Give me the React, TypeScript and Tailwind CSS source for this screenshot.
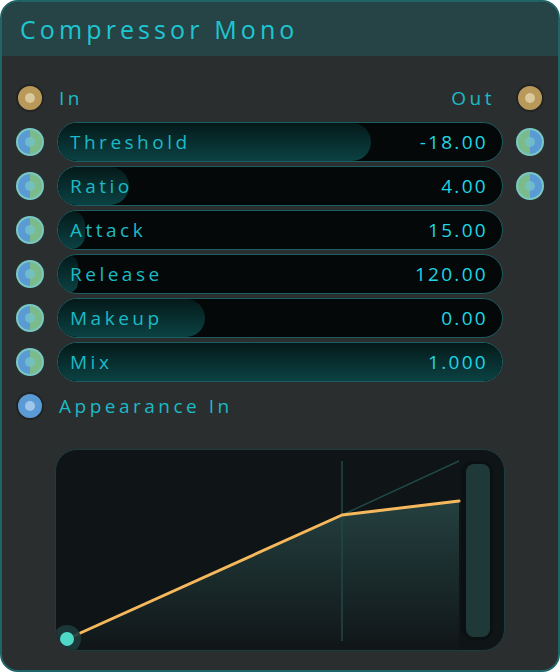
import React from 'react';

const font = { fontFamily: '"Open Sans", "DejaVu Sans", sans-serif' };

type Kind = 'gold' | 'multi' | 'multiR' | 'blue';

const Socket = ({ kind }: { kind: Kind }) => {
  if (kind === 'gold') {
    return (
      <div className="flex h-[28px] w-[28px] shrink-0 items-center justify-center rounded-full border-2 border-[#222424] bg-[#b9995a]">
        <div className="h-[10px] w-[10px] rounded-full bg-[#d9c99c]" />
      </div>
    );
  }
  if (kind === 'blue') {
    return (
      <div className="flex h-[28px] w-[28px] shrink-0 items-center justify-center rounded-full border-2 border-[#222424] bg-[#5b9bd5]">
        <div className="h-[10px] w-[10px] rounded-full bg-[#9ec6ea]" />
      </div>
    );
  }
  const bg =
    kind === 'multi'
      ? 'bg-[linear-gradient(90deg,#5b9bd5_50%,#7bbb8a_50%)]'
      : 'bg-[linear-gradient(90deg,#7bbb8a_50%,#5b9bd5_50%)]';
  return (
    <div className="flex h-[28px] w-[28px] shrink-0 items-center justify-center rounded-full bg-[#78c8c4]">
      <div className={`flex h-[24px] w-[24px] items-center justify-center rounded-full ${bg}`}>
        <div className="h-[10px] w-[10px] rounded-full bg-[#74c2c8]/80" />
      </div>
    </div>
  );
};

interface Param {
  label: string;
  value: string;
  fill: number;
  out: boolean;
}

const params: Param[] = [
  { label: 'Threshold', value: '-18.00', fill: 70.5, out: true },
  { label: 'Ratio', value: '4.00', fill: 16, out: true },
  { label: 'Attack', value: '15.00', fill: 6, out: false },
  { label: 'Release', value: '120.00', fill: 4.5, out: false },
  { label: 'Makeup', value: '0.00', fill: 33, out: false },
  { label: 'Mix', value: '1.000', fill: 100, out: false },
];

const Slider = ({ label, value, fill }: { label: string; value: string; fill: number }) => (
  <div className="relative flex h-[40px] flex-1 items-center overflow-hidden rounded-full border border-[#1b5d60] bg-[#040809]">
    <div
      className="absolute inset-y-0 left-0 rounded-full bg-[linear-gradient(180deg,#05191a,#0b4243)]"
      style={{ width: `${fill}%` }}
    />
    <span className="relative flex-1 pl-[12px] text-[19px] tracking-[3.5px] text-[#1bbac5]">{label}</span>
    <span className="relative pr-[14px] text-[19px] tracking-[2.3px] text-[#1fd6e2]">{value}</span>
  </div>
);

const Graph = () => (
  <div className="ml-[39px] h-[202px] w-[450px] overflow-hidden rounded-[22px] border border-[#1d3c3e] bg-[#0f1416]">
    <svg width="450" height="202" viewBox="0 0 450 202">
      <defs>
        <linearGradient id="area" x1="0" y1="51" x2="0" y2="195" gradientUnits="userSpaceOnUse">
          <stop offset="0" stopColor="#24403f" />
          <stop offset="1" stopColor="#111719" />
        </linearGradient>
      </defs>
      <path d="M11 189 L286 65 L403 51 L403 202 L0 202 Z" fill="url(#area)" />
      <line x1="286" y1="11" x2="286" y2="191" stroke="#1f4847" strokeWidth="1.5" />
      <line x1="286" y1="65" x2="403" y2="11" stroke="#1f4847" strokeWidth="1.5" />
      <polyline points="11,189 286,65 403,51" fill="none" stroke="#f6b85c" strokeWidth="3" strokeLinejoin="round" strokeLinecap="round" />
      <circle cx="11" cy="189" r="14" fill="#1e3b3c" opacity="0.9" />
      <circle cx="11" cy="189" r="7" fill="#4fd8c6" />
      <rect x="405" y="11" width="32" height="179" rx="12" fill="#0b1113" />
      <rect x="410" y="14" width="24" height="173" rx="8" fill="#1f3939" />
    </svg>
  </div>
);

export default function App() {
  return (
    <div className="h-[672px] w-[560px] bg-white" style={font}>
      <div className="flex h-full w-full flex-col overflow-hidden rounded-[18px] border-2 border-[#1f6568] bg-[#2b2e2f]">
        <div className="flex h-[54px] shrink-0 items-center bg-[#264345] pl-[18px] pt-[2px]">
          <span className="text-[25px] tracking-[4.1px] text-[#1fc6d2]">Compressor Mono</span>
        </div>
        <div className="flex flex-col px-[14px] pt-[20px]">
          <div className="flex h-[44px] items-center">
            <Socket kind="gold" />
            <span className="ml-[15px] flex-1 text-[19px] tracking-[3.5px] text-[#1bbac5]">In</span>
            <span className="mr-[21px] text-[19px] tracking-[3.5px] text-[#1bbac5]">Out</span>
            <Socket kind="gold" />
          </div>
          {params.map(({ label, value, fill, out }) => (
            <div key={label} className="flex h-[44px] items-center">
              <Socket kind="multi" />
              <div className="ml-[13px] mr-[13px] flex flex-1">
                <Slider label={label} value={value} fill={fill} />
              </div>
              {out ? <Socket kind="multiR" /> : <div className="w-[28px]" />}
            </div>
          ))}
          <div className="flex h-[44px] items-center">
            <Socket kind="blue" />
            <span className="ml-[15px] text-[19px] tracking-[3.5px] text-[#1bbac5]">Appearance In</span>
          </div>
          <div className="mt-[21px]">
            <Graph />
          </div>
        </div>
      </div>
    </div>
  );
}
